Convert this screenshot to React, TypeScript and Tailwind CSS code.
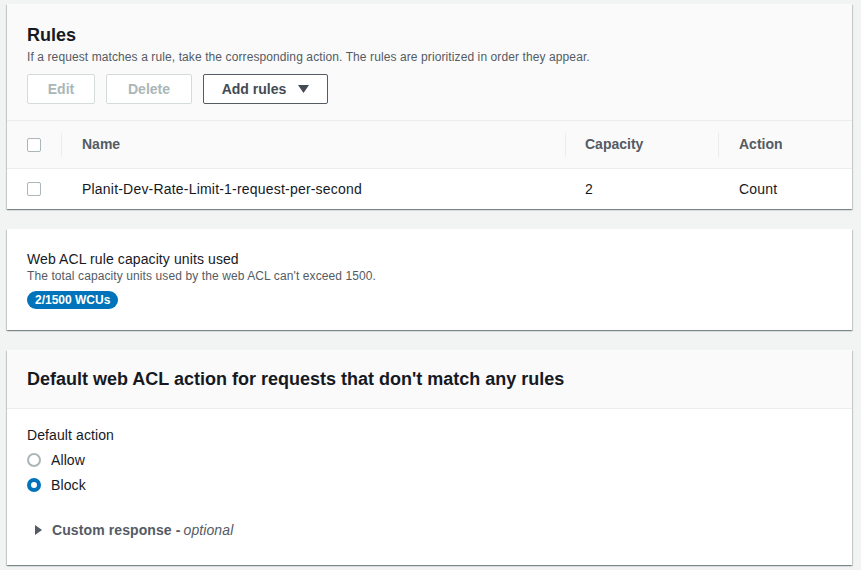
import React from "react";

const font = { fontFamily: "'Liberation Sans', Arial, sans-serif" };

function Checkbox() {
  return <span className="block h-[14px] w-[14px] rounded-[2px] border border-[#aab7b8] bg-white" />;
}

function Card(props: { children: React.ReactNode; className?: string }) {
  return (
    <div
      className={
        "bg-white shadow-[0_1px_1px_0_rgba(0,28,36,0.3),1px_1px_1px_0_rgba(0,28,36,0.15),-1px_1px_1px_0_rgba(0,28,36,0.15)] " +
        (props.className ?? "")
      }
    >
      {props.children}
    </div>
  );
}

function HeadCell(props: { children?: React.ReactNode; sep?: boolean; className?: string }) {
  return (
    <div className={"relative flex h-full items-center " + (props.className ?? "")}>
      {props.sep && <span className="absolute left-0 top-[12px] h-[24px] w-px bg-[#eaeded]" />}
      {props.children}
    </div>
  );
}

export default function App() {
  return (
    <div className="h-[570px] overflow-hidden bg-[#f2f3f3] pl-[7px] pr-[9px] pt-[4px] text-[#16191f]" style={font}>
      {/* Rules */}
      <Card>
        <div className="bg-[#fafafa] px-[20px] pb-[16px] pt-[20px]">
          <h2 className="text-[18px] font-bold leading-[22px]">Rules</h2>
          <p className="mt-[3px] text-[12px] leading-[16px] tracking-[0.1px] text-[#545b64]">
            If a request matches a rule, take the corresponding action. The rules are prioritized in order they appear.
          </p>
          <div className="mt-[9px] flex gap-[11px]">
            <button className="h-[30px] w-[68px] rounded-[2px] border border-[#d5dbdb] bg-white text-[14px] font-bold text-[#aab7b8]">
              Edit
            </button>
            <button className="h-[30px] w-[86px] rounded-[2px] border border-[#d5dbdb] bg-white text-[14px] font-bold text-[#aab7b8]">
              Delete
            </button>
            <button className="flex h-[30px] w-[125px] items-center justify-center gap-[12px] rounded-[2px] border border-[#545b64] bg-white text-[14px] font-bold text-[#444b54]">
              Add rules
              <svg width="11" height="8" viewBox="0 0 11 8">
                <path d="M0 0h11L5.5 8z" fill="#444b54" />
              </svg>
            </button>
          </div>
        </div>
        <div className="grid h-[49px] grid-cols-[54px_504px_153px_1fr] border-t border-b border-[#eaeded] bg-[#fafafa] text-[14px] font-bold text-[#545b64]">
          <HeadCell className="pl-[20px]">
            <Checkbox />
          </HeadCell>
          <HeadCell sep className="pl-[21px]">Name</HeadCell>
          <HeadCell sep className="pl-[20px]">Capacity</HeadCell>
          <HeadCell sep className="pl-[21px]">Action</HeadCell>
        </div>
        <div className="grid h-[40px] grid-cols-[54px_504px_153px_1fr] items-center text-[14px] tracking-[0.2px]">
          <div className="pl-[20px]">
            <Checkbox />
          </div>
          <div className="pl-[21px]">Planit-Dev-Rate-Limit-1-request-per-second</div>
          <div className="pl-[20px]">2</div>
          <div className="pl-[21px]">Count</div>
        </div>
      </Card>

      {/* Capacity */}
      <Card className="mt-[20px] px-[20px] pb-[19px] pt-[20px]">
        <div className="text-[14px] leading-[20px] tracking-[0.1px]">Web ACL rule capacity units used</div>
        <div className="mt-[-1px] text-[12px] leading-[16px] tracking-[0.1px] text-[#545b64]">
          The total capacity units used by the web ACL can't exceed 1500.
        </div>
        <span className="mt-[7px] inline-flex h-[18px] items-center rounded-full bg-[#0073bb] px-[8px] text-[12px] font-bold text-white">
          2/1500 WCUs
        </span>
      </Card>

      {/* Default action */}
      <Card className="mt-[20px]">
        <div className="flex h-[59px] items-center border-b border-[#eaeded] bg-[#fafafa] px-[20px]">
          <h2 className="text-[18px] font-bold leading-[22px]">
            Default web ACL action for requests that don't match any rules
          </h2>
        </div>
        <div className="px-[20px] pb-[25px] pt-[16px] tracking-[0.1px]">
          <div className="text-[14px] leading-[20px]">Default action</div>
          <div className="mt-[5px] flex flex-col gap-[5px] text-[14px] leading-[20px]">
            <label className="flex items-center gap-[10px]">
              <span className="block h-[14px] w-[14px] rounded-full border-2 border-[#aab7b8] bg-white" />
              Allow
            </label>
            <label className="flex items-center gap-[10px]">
              <span className="block h-[14px] w-[14px] rounded-full border-[4px] border-[#0073bb] bg-white" />
              Block
            </label>
          </div>
          <div className="mt-[25px] flex items-center pl-[8px] text-[14px] leading-[20px]">
            <svg width="7" height="10" viewBox="0 0 7 10" className="mr-[10px]">
              <path d="M0 0l7 5-7 5z" fill="#545b64" />
            </svg>
            <span className="font-bold text-[#545b64]">Custom response - </span>
            <span className="ml-[3px] italic text-[#545b64]">optional</span>
          </div>
        </div>
      </Card>
    </div>
  );
}
